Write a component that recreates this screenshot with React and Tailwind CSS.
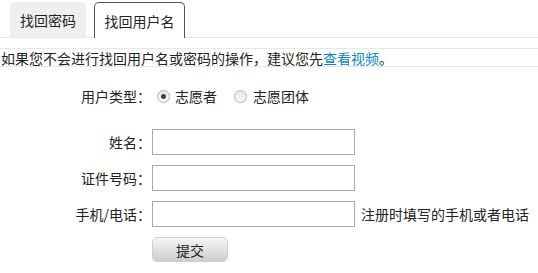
const Radio = ({ checked }) => (
    <span className="flex h-[13px] w-[13px] items-center justify-center rounded-full border border-[#b5b5b5] bg-gradient-to-b from-[#e6e6e6] to-[#fafafa]">
        {checked && <span className="h-[5px] w-[5px] rounded-full bg-[#444]" />}
    </span>
);

const Field = ({ label, hint }) => (
    <div className="flex h-[26px] items-center">
        <div className="w-[152px] pr-[1px] text-right">{label}</div>
        <input className="h-[26px] w-[203px] border border-[#aaa] bg-white outline-none" />
        {hint && <span className="ml-[6px]">{hint}</span>}
    </div>
);

export default function App() {
    return (
        <div className="h-[273px] w-[538px] overflow-hidden bg-white text-[14px] leading-none text-[#222]" style={{ fontFamily: '"Noto Sans CJK SC", "Liberation Sans", sans-serif' }}>
            <div className="flex h-[38px] items-end gap-[8px] border-b border-[#e8e8e8] pl-[10px]">
                <div className="flex h-[35px] w-[76px] items-center justify-center rounded-t-[4px] bg-[#efefef]">找回密码</div>
                <div className="-mb-px flex h-[36px] w-[91px] items-center justify-center rounded-t-[5px] border border-b-0 border-[#555] bg-white">找回用户名</div>
            </div>
            <div className="mt-[10px] flex h-[19px] items-center border-t border-b border-[#e8e8e8] pl-[1px]">
                如果您不会进行找回用户名或密码的操作，建议您先<span className="text-[#0a86c9]">查看视频</span>。
            </div>
            <div className="flex flex-col">
                <div className="mt-[17px] flex h-[24px] items-center">
                    <div className="w-[152px] pr-[1px] text-right">用户类型：</div>
                    <div className="ml-[5px] flex items-center gap-[5px]">
                        <Radio checked />
                        <span>志愿者</span>
                    </div>
                    <div className="ml-[17px] flex items-center gap-[6px]">
                        <Radio />
                        <span>志愿团体</span>
                    </div>
                </div>
                <div className="mt-[21px] flex flex-col gap-[10px]">
                    <Field label="姓名：" />
                    <Field label="证件号码：" />
                    <Field label="手机/电话：" hint="注册时填写的手机或者电话" />
                </div>
                <div className="mt-[10px] pl-[152px]">
                    <button className="h-[25px] w-[76px] rounded-[5px] border border-[#d0d0d0] bg-gradient-to-b from-[#f6f6f6] to-[#cdcdcd] text-[14px] text-[#222]">提交</button>
                </div>
            </div>
        </div>
    );
}
